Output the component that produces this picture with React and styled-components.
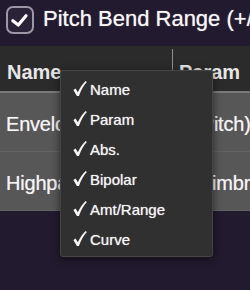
import React from "react";
import styled, { createGlobalStyle } from "styled-components";

const Global = createGlobalStyle`
  html, body { margin: 0; padding: 0; background: #221a2e; }
  body { font-family: "Liberation Sans", Arial, sans-serif; -webkit-font-smoothing: antialiased; }
`;

const Page = styled.div`
  position: relative;
  width: 250px;
  height: 290px;
  overflow: hidden;
  background: #221a2e;
`;

const TitleBar = styled.div`
  height: 46px;
  box-sizing: border-box;
  display: flex;
  align-items: flex-start;
  gap: 9px;
  padding: 6px 0 0 6px;
  white-space: nowrap;
`;

const CheckBox = styled.div`
  flex: none;
  width: 28px;
  height: 28px;
  box-sizing: border-box;
  border: 2px solid #9d96a6;
  border-radius: 7px;
  background: #2a2236;
  display: flex;
  align-items: center;
  justify-content: center;
`;

const Title = styled.div`
  font-size: 22px;
  line-height: 25px;
  color: #f6f6f6;
  text-shadow: 0 0 1px rgba(255, 255, 255, 0.7);
`;

const Table = styled.div`
  display: grid;
  grid-template-columns: 172px 1fr;
`;

const HeadCell = styled.div`
  height: 47px;
  box-sizing: border-box;
  background: #2b2b2b;
  border-bottom: 2px solid #7a7a7a;
  padding-top: 15px;
  padding-left: 7px;
  font-size: 20px;
  line-height: 23px;
  font-weight: bold;
  color: #e6e6e6;
  white-space: nowrap;
  overflow: hidden;
  position: relative;
  ${(p) =>
    p.$divider &&
    `
    &::before {
      content: "";
      position: absolute;
      left: 0;
      top: 3px;
      bottom: 0;
      width: 1px;
      background: #8c8c8c;
    }
  `}
`;

const Cell = styled.div`
  height: 59px;
  box-sizing: border-box;
  background: #575757;
  border-bottom: 1px solid #636363;
  padding-top: 20px;
  padding-left: 6px;
  font-size: 20px;
  line-height: 23px;
  letter-spacing: -0.2px;
  color: #f4f4f4;
  text-shadow: 0 0 0.8px rgba(255, 255, 255, 0.6);
  white-space: nowrap;
  overflow: hidden;
`;

const Menu = styled.div`
  position: absolute;
  left: 60px;
  top: 70px;
  width: 153px;
  height: 187px;
  box-sizing: border-box;
  padding: 3px 0 3px 0;
  background: #303030;
  border: 1px solid #454545;
  border-radius: 3px;
  box-shadow: 0 2px 8px rgba(0, 0, 0, 0.55);
`;

const MenuItem = styled.div`
  height: 30px;
  display: flex;
  align-items: center;
  gap: 4px;
  padding-left: 12px;
  font-size: 15px;
  color: #f5f5f5;
  text-shadow: 0 0 1px rgba(255, 255, 255, 0.75);
  white-space: nowrap;
`;

const MenuCheck = () => (
  <svg width="14" height="15" viewBox="0 0 13 14" style={{ flex: "none", marginTop: "-2px", marginRight: "-1px" }}>
    <path
      d="M0.3 8.3 L2.4 7.1 L4.5 10.6 C6.7 6.1 9.1 2.5 11.8 0.1 L12.9 1 C9.9 4.2 7.5 8.6 5.5 13.9 L3.6 13.9 Z"
      fill="#f6f6f6"
    />
  </svg>
);

const items = ["Name", "Param", "Abs.", "Bipolar", "Amt/Range", "Curve"];

export default function App() {
  return (
    <Page>
      <Global />
      <TitleBar>
        <CheckBox>
          <svg width="24" height="24" viewBox="0 0 24 24">
            <path
              d="M4.8 12.7 L10.3 17 L18 7.7"
              fill="none"
              stroke="#ffffff"
              strokeWidth="3.2"
              strokeLinecap="round"
              strokeLinejoin="round"
            />
          </svg>
        </CheckBox>
        <Title>Pitch Bend Range (+/- semitones)</Title>
      </TitleBar>
      <Table>
        <HeadCell>Name</HeadCell>
        <HeadCell $divider>Param</HeadCell>
        <Cell>Envelope 1</Cell>
        <Cell>1 (Pitch)</Cell>
        <Cell>Highpass</Cell>
        <Cell>1 (Timbre)</Cell>
      </Table>
      <Menu>
        {items.map((t) => (
          <MenuItem key={t}>
            <MenuCheck />
            <span>{t}</span>
          </MenuItem>
        ))}
      </Menu>
    </Page>
  );
}
